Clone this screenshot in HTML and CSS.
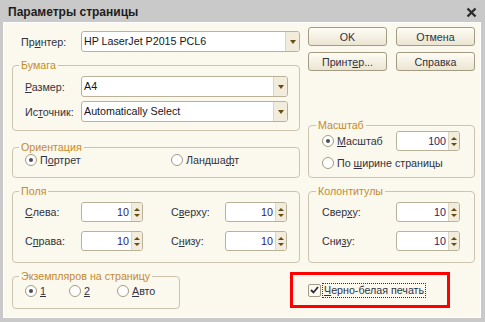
FILE: index.html
```html
<!DOCTYPE html>
<html lang="ru">
<head>
    <meta charset="UTF-8">
    <title>Параметры страницы</title>
    <link rel="stylesheet" href="styles.css">
</head>
<body>
    <div class="window">
        <div class="titlebar">
            <span class="title">Параметры страницы</span>
            <svg class="close" width="11" height="11" viewBox="0 0 11 11">
                <path d="M1.5 1.5 L9.5 9.5 M9.5 1.5 L1.5 9.5" stroke="#2a2a2a" stroke-width="2.3" fill="none"/>
            </svg>
        </div>
        <div class="content">
            <!-- LEFT COLUMN -->
            <div class="col-left">
                <div class="printer-row">
                    <span class="lbl lbl-printer">Пр<u>и</u>нтер:</span>
                    <div class="combo combo-printer">
                        <span class="combo-text">HP LaserJet P2015 PCL6</span>
                        <span class="combo-btn"></span>
                    </div>
                </div>

                <fieldset class="group group-paper">
                    <legend>Бумага</legend>
                    <div class="paper-grid">
                        <span class="lbl"><u>Р</u>азмер:</span>
                        <div class="combo">
                            <span class="combo-text">A4</span>
                            <span class="combo-btn"></span>
                        </div>
                        <span class="lbl">Ис<u>т</u>очник:</span>
                        <div class="combo">
                            <span class="combo-text">Automatically Select</span>
                            <span class="combo-btn"></span>
                        </div>
                    </div>
                </fieldset>

                <fieldset class="group group-orient">
                    <legend>Ориентация</legend>
                    <div class="orient-grid">
                        <span class="radio"><span class="radio-dot on"></span><span>П<u>о</u>ртрет</span></span>
                        <span class="radio"><span class="radio-dot"></span><span>Ландша<u>ф</u>т</span></span>
                    </div>
                </fieldset>

                <fieldset class="group group-margins">
                    <legend>Поля</legend>
                    <div class="margins-grid">
                        <span class="lbl"><u>С</u>лева:</span>
                        <div class="spin"><span class="spin-val">10</span><span class="spin-btn"></span></div>
                        <span class="lbl">С<u>в</u>ерху:</span>
                        <div class="spin"><span class="spin-val">10</span><span class="spin-btn"></span></div>
                        <span class="lbl">С<u>п</u>рава:</span>
                        <div class="spin"><span class="spin-val">10</span><span class="spin-btn"></span></div>
                        <span class="lbl">С<u>н</u>изу:</span>
                        <div class="spin"><span class="spin-val">10</span><span class="spin-btn"></span></div>
                    </div>
                </fieldset>

                <fieldset class="group group-copies">
                    <legend>Экземпляров на страницу</legend>
                    <div class="copies-grid">
                        <span class="radio"><span class="radio-dot on"></span><span><u>1</u></span></span>
                        <span class="radio"><span class="radio-dot"></span><span><u>2</u></span></span>
                        <span class="radio"><span class="radio-dot"></span><span><u>А</u>вто</span></span>
                    </div>
                </fieldset>
            </div>

            <!-- RIGHT COLUMN -->
            <div class="col-right">
                <div class="btn-row">
                    <button class="btn">OK</button>
                    <button class="btn">Отмена</button>
                </div>
                <div class="btn-row">
                    <button class="btn">Принт<u>е</u>р...</button>
                    <button class="btn">Справка</button>
                </div>

                <fieldset class="group group-right group-scale">
                    <legend>Масштаб</legend>
                    <div class="scale-grid">
                        <span class="radio"><span class="radio-dot on"></span><span><u>М</u>асштаб</span></span>
                        <div class="spin spin-wide"><span class="spin-val">100</span><span class="spin-btn"></span></div>
                        <span class="radio radio-span"><span class="radio-dot"></span><span>По <u>ш</u>ирине страницы</span></span>
                    </div>
                </fieldset>

                <fieldset class="group group-right group-header">
                    <legend>Колонтитулы</legend>
                    <div class="header-grid">
                        <span class="lbl">Свер<u>х</u>у:</span>
                        <div class="spin spin-wide"><span class="spin-val">10</span><span class="spin-btn"></span></div>
                        <span class="lbl">Сни<u>з</u>у:</span>
                        <div class="spin spin-wide"><span class="spin-val">10</span><span class="spin-btn"></span></div>
                    </div>
                </fieldset>

                <div class="bw-box">
                    <span class="check">
                        <svg width="9" height="8" viewBox="0 0 9 8">
                            <path d="M1 4 L3.5 6.5 L8 1" stroke="#2b2b33" stroke-width="1.8" fill="none"/>
                        </svg>
                    </span>
                    <span class="check-text"><u>Ч</u>ерно-белая печать</span>
                </div>
            </div>
        </div>
    </div>
</body>
</html>
```

FILE: styles.css
```css
* {
    box-sizing: border-box;
}
body {
    margin: 0;
    font-family: "Liberation Sans", Arial, sans-serif;
    font-size: 10.7px;
    color: #2f3340;
    background: #c9c9c9;
}
.window {
    width: 485px;
    height: 322px;
    background: #c9c9c9;
    display: flex;
    flex-direction: column;
}
.titlebar {
    height: 22px;
    display: flex;
    align-items: center;
    justify-content: space-between;
    padding: 2px 8px 0 8px;
}
.title {
    font-weight: bold;
    font-size: 12px;
    color: #1d1d1d;
}
.content {
    flex: 1;
    margin: 0 4px 4px 3px;
    background: #fbf8ee;
    border: 1px solid #fff;
    display: flex;
    gap: 8px;
    padding: 4px 5px 0 8px;
}
.col-left {
    width: 288px;
    display: flex;
    flex-direction: column;
}
.col-right {
    width: 167px;
    display: flex;
    flex-direction: column;
}
.lbl {
    white-space: nowrap;
}

/* groups */
.group {
    margin: 7px 0 0 0;
    border: 1px solid #ccc4ad;
    border-radius: 4px;
    padding: 5px 11px 11px 12px;
    min-width: 0;
}
.group legend {
    padding: 0 2px;
    margin-left: -6px;
    line-height: 12px;
    color: #c78a2c;
}
.group-right {
    padding-left: 13px;
    padding-right: 14px;
}

/* printer row */
.printer-row {
    display: flex;
    align-items: center;
    margin-top: 4px;
    padding-left: 9px;
}
.lbl-printer {
    width: 60px;
}
.combo-printer {
    width: 219px;
}

/* combo box */
.combo {
    display: flex;
    height: 21px;
    background: #fff;
    border: 1px solid #bab298;
    border-radius: 3px;
    overflow: hidden;
}
.combo-text {
    flex: 1;
    padding-left: 2px;
    line-height: 19px;
    color: #16161c;
}
.combo-btn {
    width: 14px;
    border-left: 1px solid #ddd6c0;
    background: #f1ecdb;
    display: flex;
    align-items: center;
    justify-content: center;
}
.combo-btn::after {
    content: "";
    border-left: 3.5px solid transparent;
    border-right: 3.5px solid transparent;
    border-top: 4px solid #6a4b12;
}

/* spin box */
.spin {
    display: flex;
    width: 62px;
    height: 20px;
    background: #fff;
    border: 1px solid #bab298;
    border-radius: 3px;
    overflow: hidden;
}
.spin-wide {
    width: 64px;
}
.spin-val {
    flex: 1;
    text-align: right;
    padding-right: 2px;
    line-height: 18px;
    color: #2b2366;
}
.spin-btn {
    width: 11px;
    border-left: 1px solid #ddd6c0;
    background: #f1ecdb;
    display: flex;
    flex-direction: column;
    align-items: center;
    justify-content: center;
    gap: 3px;
}
.spin-btn::before {
    content: "";
    border-left: 3px solid transparent;
    border-right: 3px solid transparent;
    border-bottom: 3px solid #6a4b12;
}
.spin-btn::after {
    content: "";
    border-left: 3px solid transparent;
    border-right: 3px solid transparent;
    border-top: 3px solid #6a4b12;
}

/* radio */
.radio {
    display: flex;
    align-items: center;
    gap: 3px;
    height: 14px;
    white-space: nowrap;
}
.radio-dot {
    width: 12px;
    height: 12px;
    border-radius: 50%;
    border: 1px solid #a29b84;
    background: #fff;
    display: flex;
    align-items: center;
    justify-content: center;
}
.radio-dot.on::after {
    content: "";
    width: 4px;
    height: 4px;
    border-radius: 50%;
    background: #4a4d5c;
}

/* group layouts */
.group-paper {
    padding-bottom: 8px;
}
.paper-grid {
    display: grid;
    grid-template-columns: 56px 207px;
    row-gap: 4px;
    align-items: center;
}
.group-orient {
    margin-top: 10px;
    padding-top: 0;
    padding-bottom: 10px;
}
.orient-grid {
    display: grid;
    grid-template-columns: 146px auto;
}
.margins-grid {
    display: grid;
    grid-template-columns: 56px 90px 54px 62px;
    row-gap: 9px;
    align-items: center;
}
.group-copies {
    width: 168px;
    padding-top: 2px;
    padding-bottom: 10px;
}
.copies-grid {
    display: grid;
    grid-template-columns: 44px 48px auto;
}

/* buttons */
.btn-row {
    display: flex;
    gap: 9px;
}
.btn-row + .btn-row {
    margin-top: 6px;
}
.btn {
    width: 79px;
    height: 19px;
    padding: 0;
    border: 1px solid #a39b82;
    border-radius: 3px;
    background: linear-gradient(#fefcf5, #ebe5d1);
    font: inherit;
    color: #2f3340;
}
.group-scale {
    margin-top: 48px;
    padding-top: 0;
    padding-bottom: 7px;
}
.scale-grid {
    display: grid;
    grid-template-columns: 74px 64px;
    row-gap: 5px;
    align-items: center;
}
.radio-span {
    grid-column: 1 / 3;
}
.header-grid {
    display: grid;
    grid-template-columns: 74px 64px;
    row-gap: 9px;
    align-items: center;
}

/* black & white checkbox */
.bw-box {
    margin: 9px 0 0 -18px;
    width: 160px;
    height: 36px;
    border: 3px solid #ff0000;
    display: flex;
    align-items: center;
    padding-left: 15px;
    gap: 1px;
}
.check {
    width: 13px;
    height: 13px;
    border: 1px solid #a29b84;
    border-radius: 2px;
    background: #fbf9f1;
    display: flex;
    align-items: center;
    justify-content: center;
}
.check-text {
    border: 1px dotted #333;
    padding: 0 1px;
    line-height: 13px;
    white-space: nowrap;
}
```
